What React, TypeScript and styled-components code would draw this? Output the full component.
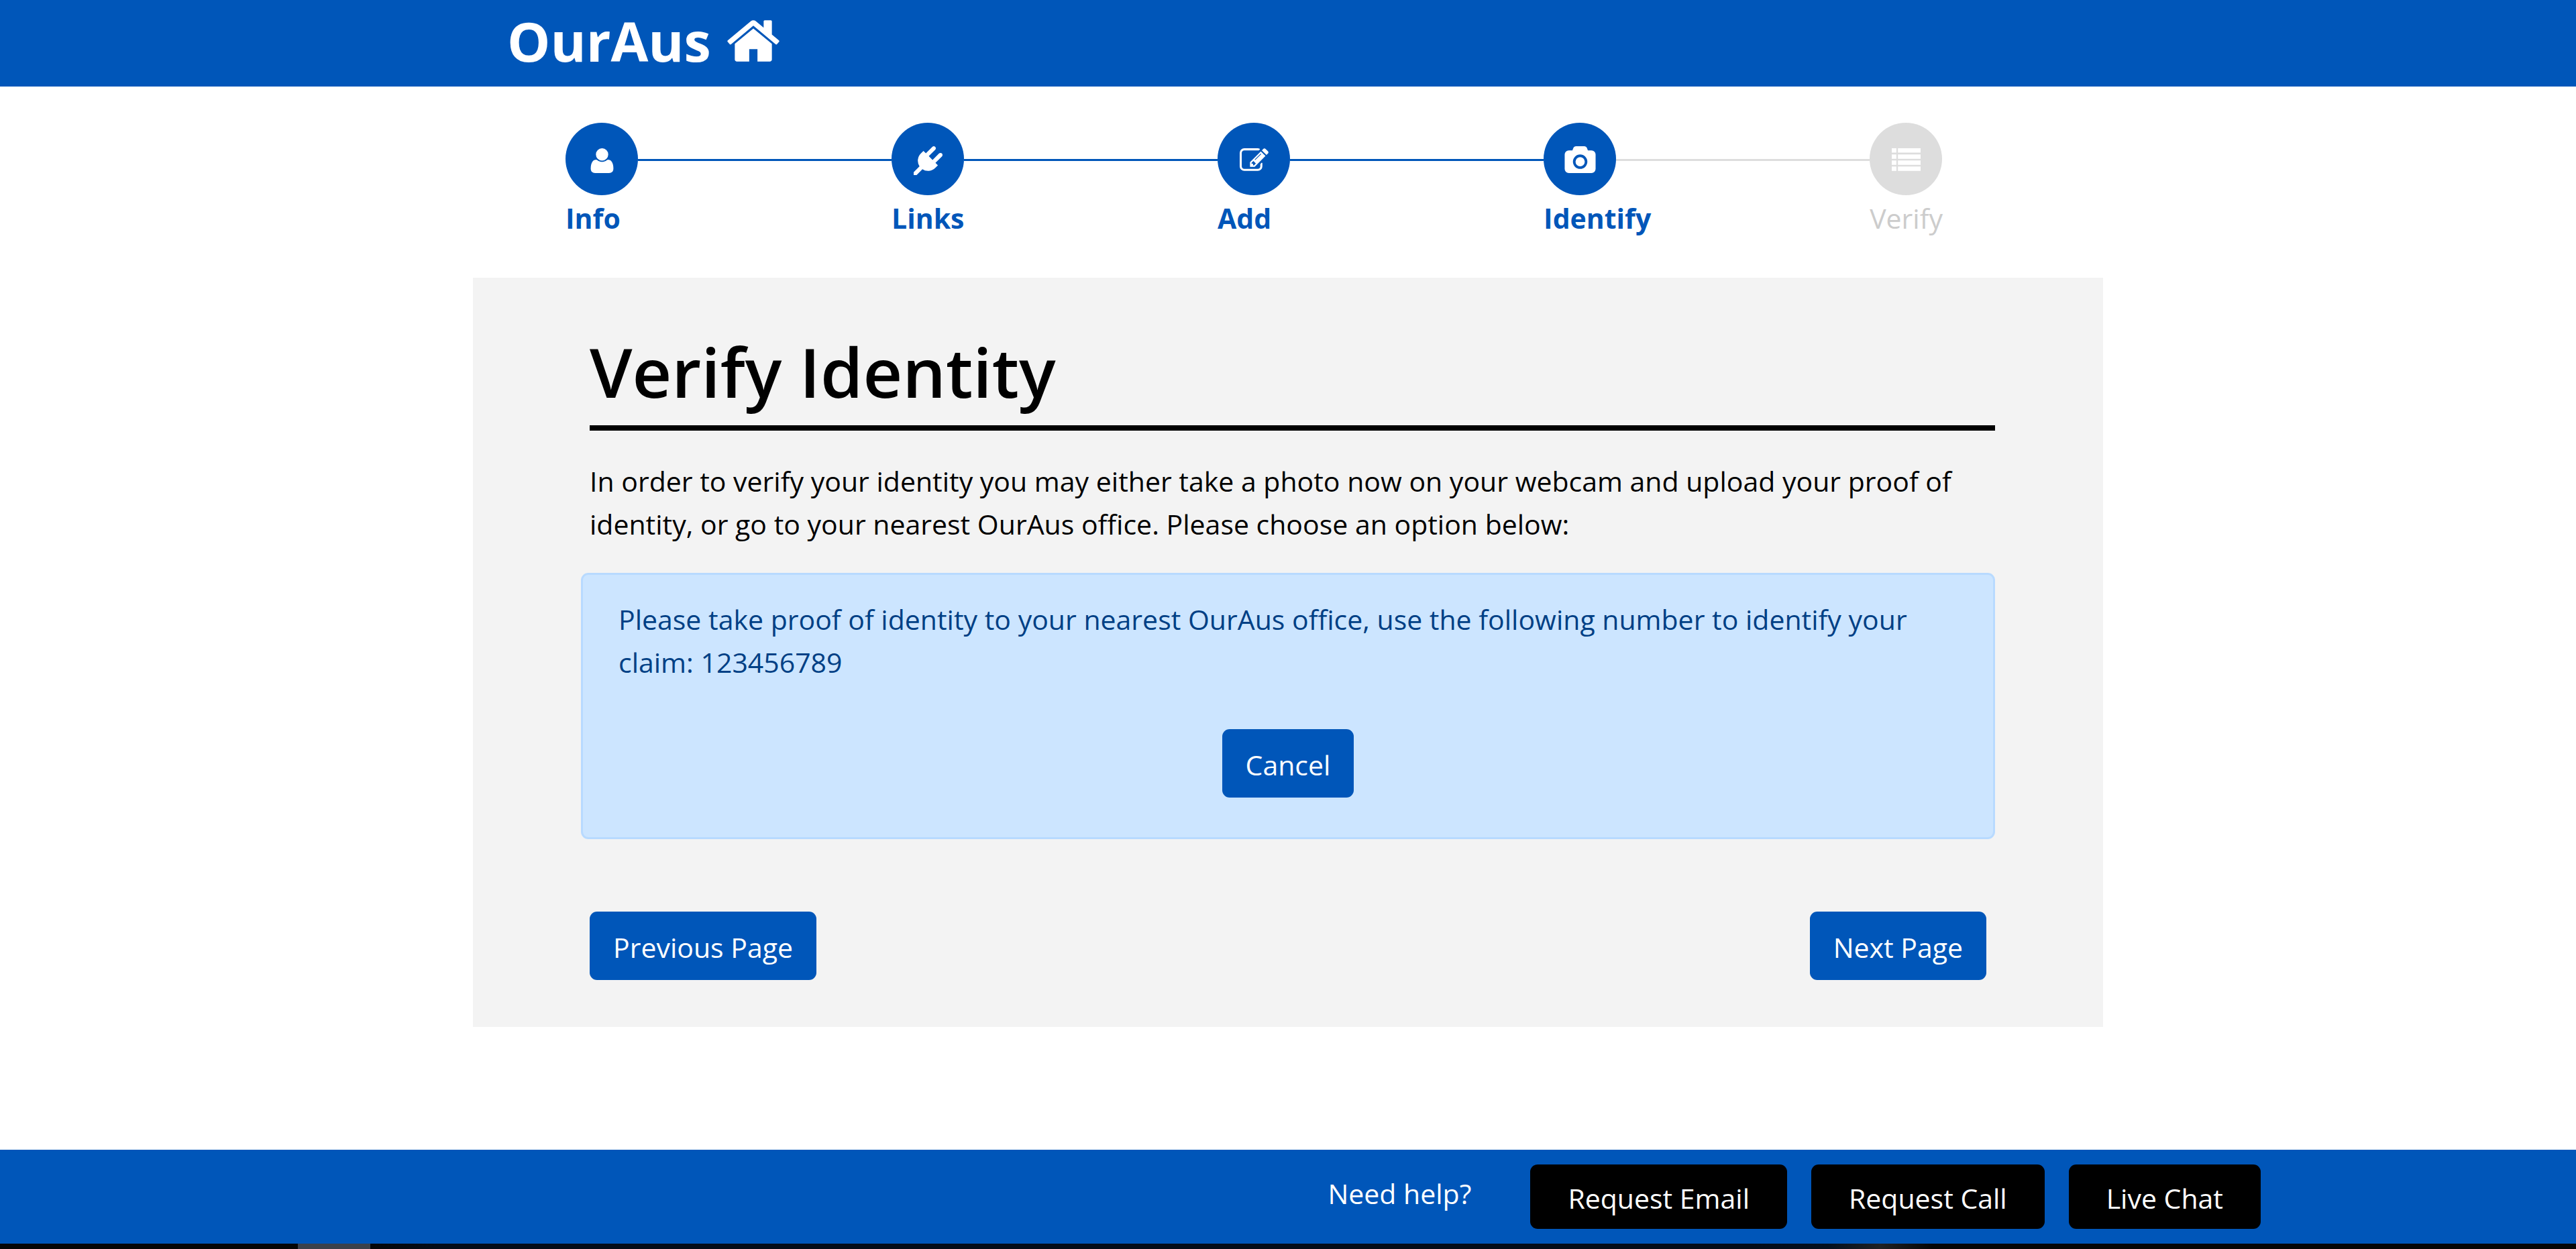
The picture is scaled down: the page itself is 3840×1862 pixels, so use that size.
import React from "react";
import styled, { createGlobalStyle } from "styled-components";

const BLUE = "#0056b9";
const MUTED = "#dddddd";

const GlobalStyle = createGlobalStyle`
  *, *::before, *::after { box-sizing: border-box; }
  body {
    margin: 0;
    background: #fff;
    color: #000;
    font-family: "Segoe UI", "Open Sans", "Noto Sans", sans-serif;
    font-size: 41px;
    line-height: 64px;
  }
`;

const Page = styled.div`
  min-height: 100vh;
  display: flex;
  flex-direction: column;
`;

const Header = styled.header`
  background: ${BLUE};
  height: 129px;
  padding-left: calc(50% - 1164px);
`;

const Brand = styled.a`
  display: inline-flex;
  gap: 20px;
  padding-top: 3px;
  color: #fff;
  font-size: 81px;
  font-weight: 700;
  line-height: 116px;
  text-decoration: none;

  svg { margin-top: 15px; }
`;

const Icon = styled.svg<{ $size: number }>`
  width: ${(p) => p.$size}px;
  height: ${(p) => p.$size}px;
  fill: currentColor;
  overflow: visible;
`;

const Main = styled.main`
  flex: 1;
  width: 100%;
  max-width: 2430px;
  margin: 0 auto;
`;

const Steps = styled.ol`
  display: flex;
  list-style: none;
  margin: 0;
  padding: 54px 239px 57px 138px;
`;

const Step = styled.li<{ $muted?: boolean }>`
  flex: ${(p) => (p.$muted ? "0 0 108px" : "1")};
  color: ${(p) => (p.$muted ? "#cccccc" : BLUE)};
  font-weight: ${(p) => (p.$muted ? 400 : 700)};
`;

const Track = styled.div`
  display: flex;
  align-items: center;
`;

const Circle = styled.span<{ $muted?: boolean }>`
  flex: none;
  display: flex;
  align-items: center;
  justify-content: center;
  width: 108px;
  height: 108px;
  padding-top: 5px;
  border-radius: 50%;
  color: #fff;
  background: ${(p) => (p.$muted ? MUTED : BLUE)};
`;

const Connector = styled.span<{ $muted?: boolean }>`
  flex: 1;
  height: 3px;
  margin-top: 3px;
  background: ${(p) => (p.$muted ? MUTED : BLUE)};
`;

const StepLabel = styled.div`
  padding-top: 2px;
`;

const Panel = styled.section`
  background: #f3f3f3;
  padding: 76px 161px 70px 174px;
`;

const Title = styled.h1`
  margin: 0 0 43px;
  padding-bottom: 16px;
  border-bottom: 8px solid #000;
  font-size: 102px;
  font-weight: 600;
  line-height: 128px;
`;

const Text = styled.p`
  margin: 0;
`;

const Alert = styled.div`
  margin: 41px 0 108px -13px;
  padding: 34px 53px 59px;
  border: 3px solid #b8daff;
  border-radius: 11px;
  background: #cce5ff;
  color: #004085;
`;

const Actions = styled.div<{ $center?: boolean }>`
  display: flex;
  justify-content: ${(p) => (p.$center ? "center" : "space-between")};
  padding-top: ${(p) => (p.$center ? 68 : 0)}px;
  padding-right: ${(p) => (p.$center ? 0 : 13)}px;
`;

const Button = styled.button`
  padding: 21px 35px 17px;
  border: 0;
  border-radius: 11px;
  background: ${BLUE};
  color: #fff;
  font: inherit;
  white-space: nowrap;
  cursor: pointer;
`;

const HelpButton = styled(Button)`
  padding: 18px 56px 14px;
  background: #000;
`;

const Footer = styled.footer`
  display: flex;
  justify-content: flex-end;
  gap: 36px;
  padding: 22px 470px 22px 0;
  background: ${BLUE};
  color: #fff;
`;

const HelpText = styled.span`
  padding: 11px 52px 0 0;
`;

const Taskbar = styled.div`
  display: flex;
  height: 8px;
  background: linear-gradient(90deg, #060606 0 14%, #040c18 17% 68%, #04101f 71%, #202124 73%, #060606 75%);
`;

const TaskbarItem = styled.span`
  width: 108px;
  margin-left: 444px;
  background: #3b414b;
`;

const PATHS = {
  home: "M1472 992v480q0 26-19 45t-45 19h-384v-384h-256v384h-384q-26 0-45-19t-19-45v-480q0-1 .5-3t.5-3l575-474 575 474q1 2 1 6zm223-69l-62 74q-8 9-21 11h-3q-13 0-21-7l-692-577-692 577q-12 8-24 7-13-2-21-11l-62-74q-8-10-7-23.5t11-21.5l719-599q32-26 76-26t76 26l244 204v-195q0-14 9-23t23-9h192q14 0 23 9t9 23v408l219 182q10 8 11 21.5t-7 23.5z",
  user: "M1600 1405q0 120-73 189.5t-194 69.5h-874q-121 0-194-69.5t-73-189.5q0-53 3.5-103.5t14-109 26.5-108.5 43-97.5 62-81 85.5-53.5 111.5-20q9 0 42 21.5t74.5 48 108 48 133.5 21.5 133.5-21.5 108-48 74.5-48 42-21.5q61 0 111.5 20t85.5 53.5 62 81 43 97.5 26.5 108.5 14 109 3.5 103.5zm-320-893q0 159-112.5 271.5t-271.5 112.5-271.5-112.5-112.5-271.5 112.5-271.5 271.5-112.5 271.5 112.5 112.5 271.5z",
  plug: "M1755 453q37 38 37 90.5t-37 90.5l-401 400 150 150-160 160q-163 163-389.5 186.5t-411.5-100.5l-362 362h-181v-181l362-362q-124-185-100.5-411.5t186.5-389.5l160-160 150 150 400-401q38-37 91-37t90 37 37 90.5-37 90.5l-400 401 234 234 401-400q38-37 91-37t90 37z",
  edit: "M888 1184l116-116-152-152-116 116v56h96v96h56zm440-720q-16-16-33 1l-350 350q-17 17-1 33t33-1l350-350q17-17 1-33zm80 594v190q0 119-84.5 203.5t-203.5 84.5h-832q-119 0-203.5-84.5t-84.5-203.5v-832q0-119 84.5-203.5t203.5-84.5h832q63 0 117 25 15 7 18 23 3 17-9 29l-49 49q-14 14-32 8-23-6-45-6h-832q-66 0-113 47t-47 113v832q0 66 47 113t113 47h832q66 0 113-47t47-113v-126q0-13 9-22l64-64q15-15 35-7t20 29zm-96-738l288 288-672 672h-288v-288zm444 132l-92 92-288-288 92-92q28-28 68-28t68 28l152 152q28 28 28 68t-28 68z",
  camera: "M896 672q119 0 203.5 84.5t84.5 203.5-84.5 203.5-203.5 84.5-203.5-84.5-84.5-203.5 84.5-203.5 203.5-84.5zm704-416q106 0 181 75t75 181v896q0 106-75 181t-181 75h-1408q-106 0-181-75t-75-181v-896q0-106 75-181t181-75h224l51-136q19-49 69.5-84.5t103.5-35.5h512q53 0 103.5 35.5t69.5 84.5l51 136h224zm-704 1152q185 0 316.5-131.5t131.5-316.5-131.5-316.5-316.5-131.5-316.5 131.5-131.5 316.5 131.5 316.5 316.5 131.5z",
  list: "M0 128h288v272h-288zM384 128h1408v272h-1408zM0 506h288v272h-288zM384 506h1408v272h-1408zM0 884h288v272h-288zM384 884h1408v272h-1408zM0 1262h288v272h-288zM384 1262h1408v272h-1408z",
};

type IconName = keyof typeof PATHS;

function Glyph({ name, size }: { name: IconName; size: number }) {
  return (
    <Icon $size={size} viewBox="0 0 1792 1792" aria-hidden="true">
      <path d={PATHS[name]} />
    </Icon>
  );
}

const STEPS: { label: string; icon: IconName; muted?: boolean }[] = [
  { label: "Info", icon: "user" },
  { label: "Links", icon: "plug" },
  { label: "Add", icon: "edit" },
  { label: "Identify", icon: "camera" },
  { label: "Verify", icon: "list", muted: true },
];

export default function App() {
  return (
    <Page>
      <GlobalStyle />
      <Header>
        <Brand href="#">
          OurAus
          <Glyph name="home" size={86} />
        </Brand>
      </Header>
      <Main>
        <Steps>
          {STEPS.map((step, i) => (
            <Step key={step.label} $muted={step.muted}>
              <Track>
                <Circle $muted={step.muted}>
                  <Glyph name={step.icon} size={43} />
                </Circle>
                {i < STEPS.length - 1 && <Connector $muted={STEPS[i + 1].muted} />}
              </Track>
              <StepLabel>{step.label}</StepLabel>
            </Step>
          ))}
        </Steps>
        <Panel>
          <Title>Verify Identity</Title>
          <Text>
            In order to verify your identity you may either take a photo now on your webcam and upload your proof of
            identity, or go to your nearest OurAus office. Please choose an option below:
          </Text>
          <Alert role="alert">
            <Text>
              Please take proof of identity to your nearest OurAus office, use the following number to identify your
              claim: 123456789
            </Text>
            <Actions $center>
              <Button type="button">Cancel</Button>
            </Actions>
          </Alert>
          <Actions>
            <Button type="button">Previous Page</Button>
            <Button type="button">Next Page</Button>
          </Actions>
        </Panel>
      </Main>
      <Footer>
        <HelpText>Need help?</HelpText>
        <HelpButton type="button">Request Email</HelpButton>
        <HelpButton type="button">Request Call</HelpButton>
        <HelpButton type="button">Live Chat</HelpButton>
      </Footer>
      <Taskbar>
        <TaskbarItem />
      </Taskbar>
    </Page>
  );
}
